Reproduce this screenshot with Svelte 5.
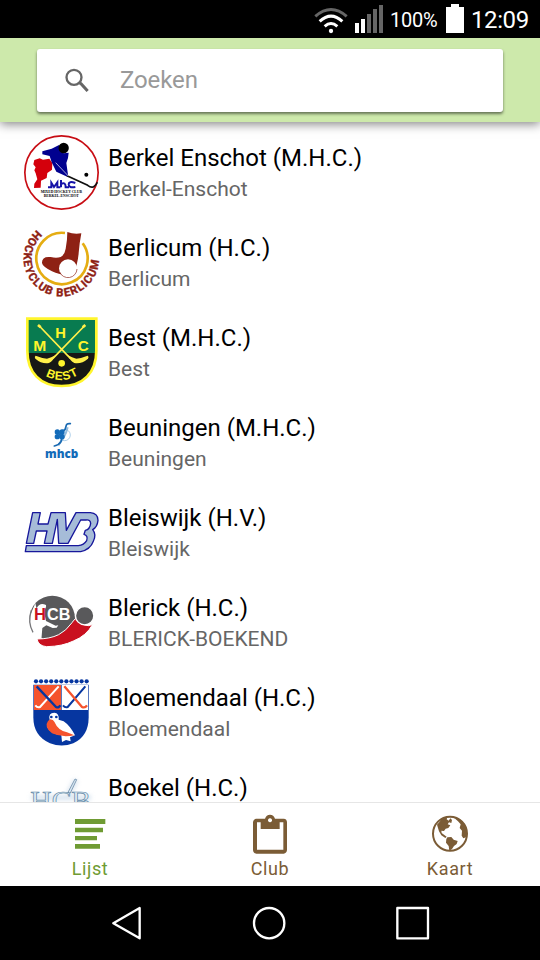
<script>
  const clubs = [
    { id: 'berkel', name: 'Berkel Enschot (M.H.C.)', city: 'Berkel-Enschot', box: '27 21 225 225' },
    { id: 'berlicum', name: 'Berlicum (H.C.)', city: 'Berlicum', box: '27 15 225 225' },
    { id: 'best', name: 'Best (M.H.C.)', city: 'Best', box: '27 15 225 225' },
    { id: 'beuningen', name: 'Beuningen (M.H.C.)', city: 'Beuningen', box: '27 -15 225 225' },
    { id: 'bleiswijk', name: 'Bleiswijk (H.V.)', city: 'Bleiswijk', box: '27 -15 225 225' },
    { id: 'blerick', name: 'Blerick (H.C.)', city: 'BLERICK-BOEKEND', box: '27 0 225 225' },
    { id: 'bloemendaal', name: 'Bloemendaal (H.C.)', city: 'Bloemendaal', box: '27 15 225 225' },
    { id: 'boekel', name: 'Boekel (H.C.)', city: 'Boekel', box: '27 0 225 225' }
  ];
  const dots = Array.from({ length: 11 }, (_, i) => 63 + i * 15.2);
</script>

<div class="screen">
  <div class="status">
    <svg class="wifi" width="34" height="38" viewBox="42 0 102 114" fill="none" stroke="#fff" stroke-width="8">
      <path d="M46 49Q93 8 140 49" stroke="#666" stroke-width="9" />
      <path d="M59 64Q93 33 127 64" stroke-width="9" />
      <path d="M74 79Q93 62 112 79" stroke-width="9" />
      <circle cx="93" cy="93" r="6.500" fill="#fff" stroke="none" />
    </svg>
    <svg class="signal" width="28" height="38" viewBox="165 0 84 114" fill="#666">
      <path fill="#fff" d="M165 69h12v30h-12zM183 57h12v42h-12z" />
      <path d="M201 42h12v57h-12zM219 27h12v72h-12zM237 15h12v84h-12z" />
    </svg>
    <span class="percent">100%</span>
    <svg class="battery" width="18" height="38" viewBox="438 0 54 114"><path fill="#fff" d="M438 21h15v-9h24v9h15v78h-54z" /></svg>
    <span class="clock">12:09</span>
  </div>

  <header>
    <div class="search">
      <svg width="24" height="25" viewBox="193 116 72 75" fill="none" stroke="#666" stroke-width="7">
        <circle cx="220" cy="144" r="22.500" />
        <path d="M236 160l5 3 20 22" stroke-width="9" />
      </svg>
      <span>Zoeken</span>
    </div>
  </header>

  <main>
    {#each clubs as club (club.id)}
      <div class="row">
        <svg class="logo" width="75" height="75" viewBox={club.box}>
          {#if club.id === 'berkel'}
            <circle cx="139.500" cy="133.500" r="110" fill="#fff" stroke="#c80d14" stroke-width="5" />
            <path fill="#d4000c" d="M58 96l16-5 10 4 19-3 9 13-1 20-14 10-2 15-17 8-1 21-20 1 1-13 9-13-5-18-4-9 4-9-7-9z" />
            <path fill="#00008f" d="M82 70l28-8 22-11 14 25 15-2-2 16-5 15 6 43-36-17-14-28-6-19-22-5z" />
            <circle cx="146" cy="60" r="15.500" fill="#000" />
            <path d="M158 142l62 29q10 8 18 4 8-4 11-13" fill="none" stroke="#111" stroke-width="5" transform="translate(-2 1)" />
            <path d="M122 104l38 40" fill="none" stroke="#fff" stroke-width="2" />
            <circle cx="214" cy="140" r="6" fill="#000" />
            <g fill="none" stroke="#1612a8" stroke-width="6">
              <path d="M99 178h10v-14l8 13 10-14v15h9M138 156v22M138 168q14-8 14 10h10M181 165q-20-7-20 4 0 12 20 8" />
            </g>
            <text x="139" y="194" text-anchor="middle" textLength="124" lengthAdjust="spacingAndGlyphs" font-family="Liberation Serif, serif" font-size="13" font-weight="700">MIXED HOCKEY CLUB</text>
            <text x="139" y="207" text-anchor="middle" textLength="105" lengthAdjust="spacingAndGlyphs" font-family="Liberation Serif, serif" font-size="13" font-weight="700">BERKEL-ENSCHOT</text>
          {:else if club.id === 'berlicum'}
            <defs><path id="berlicum-arc" d="M66 30A113 113 0 1 0 252 118" /></defs>
            <path d="M150 39A77 77 0 1 0 203 70" fill="none" stroke="#e5ad12" stroke-width="8" />
            <path fill="#8e2114" d="M157 36q20 8 42 4-6 31-8 59-1 16-6 35-5 29-32 30-18 1-42-10-28-14-30-25-1-21 26-18 17 4 30 0 12-6 15-25 5-25 5-50z" />
            <circle cx="159" cy="145" r="27" fill="#fff" />
            <path d="M134 156A27 27 0 0 0 186 147" fill="none" stroke="#8e2114" stroke-width="2" />
            <text font-family="Roboto, sans-serif" font-size="34" font-weight="700" fill="#8e2114" stroke="#8e2114" stroke-width="1"><textPath href="#berlicum-arc" textLength="448">HOCKEYCLUB BERLICUM</textPath></text>
          {:else if club.id === 'best'}
            <defs>
              <clipPath id="best-shield"><path d="M37 26H244V122C244 188 204 228 140 228S37 188 37 122z" /></clipPath>
              <path id="best-arc" d="M82 192Q140 230 200 188" />
            </defs>
            <g clip-path="url(#best-shield)">
              <path fill="#087b50" d="M30 20h220v110H30z" />
              <path fill="#171815" d="M30 129h220v110H30z" />
            </g>
            <path d="M37 26H244V122C244 188 204 228 140 228S37 188 37 122z" fill="none" stroke="#fff52c" stroke-width="8" />
            <path d="M73 48L166 145M208 48L114 145" stroke="#fff04a" stroke-width="5" />
            <path d="M69 45l8 7M211 45l-8 7" stroke="#fff04a" stroke-width="8" />
            <path d="M62 137q20 8 34 9 13-3 25-10-6 17-19 23-21 4-41-13-4-6 1-9zM218 137q-20 8-34 9-13-3-25-10 6 17 19 23 21 4 41-13 4-6-1-9z" fill="#fff04a" />
            <circle cx="140" cy="160" r="10" fill="#fff52c" />
            <g font-family="Liberation Sans, sans-serif" font-weight="700" fill="#fff52c" text-anchor="middle">
              <text x="137" y="85" font-size="45" textLength="32" lengthAdjust="spacingAndGlyphs">H</text>
              <text x="74" y="124" font-size="46" textLength="39" lengthAdjust="spacingAndGlyphs">M</text>
              <text x="205" y="124" font-size="46" textLength="33" lengthAdjust="spacingAndGlyphs">C</text>
              <text font-size="36"><textPath href="#best-arc" startOffset="50%" textLength="104">BEST</textPath></text>
            </g>
          {:else if club.id === 'beuningen'}
            <circle cx="149" cy="75" r="17" fill="none" stroke="#8ab9df" stroke-width="2" />
            <path d="M158 52q-4 18-12 30l-16 24" fill="none" stroke="#8fbadd" stroke-width="6" />
            <path d="M166 41q-12-2-13 8-1 9-8 14l-7 32q-6 10-20 13" fill="none" stroke="#1768b1" stroke-width="5" stroke-linecap="round" />
            <g fill="#136bb9">
              <circle cx="127" cy="66" r="8" /><circle cx="141" cy="66" r="8" />
              <circle cx="127" cy="80" r="8" /><circle cx="141" cy="80" r="8" />
              <path d="M125 65l18 16M143 65l-18 16" stroke="#136bb9" stroke-width="4" />
              <text x="90" y="143" font-family="Open Sans, sans-serif" font-size="34" font-weight="800" textLength="100" lengthAdjust="spacingAndGlyphs">mhcb</text>
            </g>
          {:else if club.id === 'bleiswijk'}
            <g fill="#a6bcd8" stroke="#17179b" stroke-width="4" stroke-linejoin="round">
              <path d="M53 38H76L69 72H99L108 38H151L154 91 183 38H226Q249 40 249 61 247 81 233 89 245 103 235 124 226 149 197 155H31L34 137H190Q207 135 215 122 220 106 207 103L211 91Q225 88 227 70 226 58 213 60H197L159 130H131L127 58 112 130H88L96 93H64L56 130H34z" />
            </g>
          {:else if club.id === 'blerick'}
            <circle cx="112" cy="100" r="68" fill="#59595b" />
            <path d="M61 55L46 90q-7 36 13 61l13 7-3-19 3-36z" fill="#fff" />
            <path d="M49 76q-12 36 5 66" fill="none" stroke="#77777a" stroke-width="4" />
            <path d="M66 68q9-17 27-8 2 9-7 16l7 32 29 14 8-1-5 7-12 1-19-8-12 8-3 36-14-2-1-29-4-31 5-25z" fill="#fff" />
            <path d="M66 162q38 0 65-13 22-11 40-36 12-18 19-12 6 17 19 19 12 5 24-2-19 35-58 50-32 16-80 17-25-2-29-23z" fill="#c9101f" stroke="#fff" stroke-width="3" />
            <circle cx="209" cy="92" r="27.500" fill="#59595b" stroke="#fff" stroke-width="4" />
            <path d="M59 72h31v34H59z" fill="#fff" />
            <g font-family="Liberation Sans, sans-serif" font-size="47" font-weight="700">
              <text x="57" y="106" textLength="36" lengthAdjust="spacingAndGlyphs" fill="#c9101f">H</text>
              <text x="96" y="106" textLength="70" lengthAdjust="spacingAndGlyphs" fill="#fff">CB</text>
            </g>
          {:else if club.id === 'bloemendaal'}
            <g fill="#0636a0">
              {#each dots as x}<circle cx={x} cy="34" r="6.300" />{/each}
            </g>
            <path d="M55 44h166v98q0 57-46 78-35 13-70 0-50-22-50-78z" fill="#0636a0" />
            <path d="M57 45h81v75H57z" fill="#f5532d" />
            <path d="M140 45h79v75h-79z" fill="#fff" />
            <g fill="none" stroke-width="6" stroke-linejoin="round">
              <path d="M131 49L75 111q-8 3-14-5" stroke="#fff" />
              <path d="M65 49L123 111q9 4 13-5" stroke="#0636a0" stroke-width="7" />
              <path d="M211 49L158 111q-8 3-14-5" stroke="#0636a0" />
              <path d="M148 49L201 111q9 4 15-5" stroke="#f5532d" stroke-width="7" />
            </g>
            <path d="M104 149q-5-21 14-21 15 1 13 21l15 5q19 13 34 42l-15 6 2 12-14-4-12 6-2-20q-31-4-42-24z" fill="#fff" />
            <path d="M106 148q9 1 12 7 11 26 38 32l22 9q-36 8-67-6-25-19-12-37z" fill="#f5532d" />
            <circle cx="109" cy="141" r="4" fill="#0636a0" /><circle cx="124" cy="141" r="4" fill="#0636a0" />
          {:else}
            <defs><filter id="boekel-glow" x="-20%" y="-40%" width="140%" height="180%"><feGaussianBlur stdDeviation="6" /></filter></defs>
            <path d="M48 98h180M183 44l-22 43" stroke="#b7cde2" stroke-width="16" opacity=".5" filter="url(#boekel-glow)" />
            <text x="46" y="133" font-family="Liberation Serif, serif" font-size="78" fill="#e3edf5" stroke="#6189a8" stroke-width="2" textLength="182" lengthAdjust="spacingAndGlyphs">HCB</text>
            <path d="M180 42l5 2-19 40-7-2z" fill="#d9e7f1" stroke="#54799a" stroke-width="2" />
          {/if}
        </svg>
        <div class="copy">
          <div class="name">{club.name}</div>
          <div class="city">{club.city}</div>
        </div>
      </div>
    {/each}
  </main>

  <nav class="tabs">
    <div class="tab active">
      <svg width="36" height="40" viewBox="171 147 108 120" fill="currentColor"><path d="M180 162h91v15h-91zM180 188h84v14h-84zM180 213h66v13h-66zM180 237h75v14h-75z" /></svg>
      <span>Lijst</span>
    </div>
    <div class="tab">
      <svg width="36" height="40" viewBox="66 57 108 120" fill="currentColor" fill-rule="evenodd"><path d="M79 71H105Q109 59 120 59T135 71H161Q171 72 171 82V165Q170 175 161 176H79Q70 175 69 165V82Q70 72 79 71ZM81 82V164H160V82H149V102H92V82ZM120 70a6 6 0 1 0 .1 0z" /></svg>
      <span>Club</span>
    </div>
    <div class="tab">
      <svg width="36" height="40" viewBox="606 57 108 120">
        <circle cx="660" cy="116" r="51" fill="none" stroke="currentColor" stroke-width="6" />
        <path fill="currentColor" d="M621 89L638 70 652 67 650 73 656 77 661 70 666 75 664 84 657 82 653 88 661 91 655 99 647 101 642 108 634 107 635 114 642 119 650 125 646 129 634 121 627 109zM652 127L664 126 671 134 683 138 680 147 672 153 666 162 658 167 656 153 648 143 649 132zM673 69L690 73 703 86 711 104 708 127 700 130 695 122 696 107 689 99 692 88 684 79z" />
      </svg>
      <span>Kaart</span>
    </div>
  </nav>

  <div class="system">
    <svg width="30" height="34" viewBox="66 79 90 102" fill="none" stroke="#fff" stroke-width="7" stroke-linejoin="round"><path d="M149 85v91L70 130.500z" /></svg>
    <svg width="34" height="34" viewBox="487 79 102 102" fill="none" stroke="#fff" stroke-width="7"><circle cx="538.500" cy="130.500" r="45.500" /></svg>
    <svg width="34" height="34" viewBox="918 79 102 102" fill="none" stroke="#fff" stroke-width="7" stroke-linejoin="round"><path d="M922 85h92v91h-92z" /></svg>
  </div>
</div>

<style>
  .screen {
    width: 540px;
    height: 960px;
    display: flex;
    flex-direction: column;
    overflow: hidden;
    background: #fff;
    font-family: Roboto, sans-serif;
  }
  svg { display: block; flex: none; }
  .logo { overflow: visible; }
  .status {
    height: 38px;
    flex: none;
    box-sizing: border-box;
    padding-right: 10px;
    display: flex;
    justify-content: flex-end;
    align-items: center;
    background: #000;
    color: #fff;
  }
  .signal { margin-left: 7px; }
  .percent { width: 47px; margin: 2px 0 0 7px; font-size: 20px; letter-spacing: -0.2px; white-space: nowrap; }
  .battery { margin-left: 9px; }
  .clock { width: 59px; margin: 2px 0 0 7px; font-size: 24px; letter-spacing: -0.4px; white-space: nowrap; }
  header {
    height: 84px;
    flex: none;
    box-sizing: border-box;
    padding: 11px 37px;
    background: #cde9ab;
    box-shadow: 0 2px 10px rgba(0, 0, 0, 0.5);
    clip-path: inset(0 0 -20px 0);
    z-index: 1;
  }
  .search {
    height: 63px;
    box-sizing: border-box;
    padding-left: 28px;
    display: flex;
    align-items: center;
    background: #fff;
    border-radius: 3px;
    box-shadow: 0 2px 3px rgba(0, 0, 0, 0.5);
  }
  .search span { margin: 0 0 2px 31px; font-size: 24px; letter-spacing: -0.1px; color: #999; }
  main { flex: 1; min-height: 0; padding-top: 6px; overflow: hidden; }
  .row { height: 90px; box-sizing: border-box; padding: 7px 24px; display: flex; }
  .copy { margin-left: 9px; padding-top: 7px; white-space: nowrap; }
  .name { font-size: 24px; line-height: 32px; color: #000; }
  .city { font-size: 21px; line-height: 30px; color: #666; }
  .tabs {
    height: 84px;
    flex: none;
    box-sizing: border-box;
    border-top: 1px solid #e6e6e6;
    display: flex;
    color: #7b5c36;
    background: #fff;
  }
  .tab { flex: 1; padding-top: 11px; display: flex; flex-direction: column; align-items: center; }
  .active { color: #6f9b33; }
  .tab span { margin-top: 4px; font-size: 18px; line-height: 22px; letter-spacing: 0.6px; }
  .system {
    height: 74px;
    flex: none;
    box-sizing: border-box;
    padding: 0 110px 0 112px;
    display: flex;
    align-items: center;
    justify-content: space-between;
    background: #000;
  }
</style>
